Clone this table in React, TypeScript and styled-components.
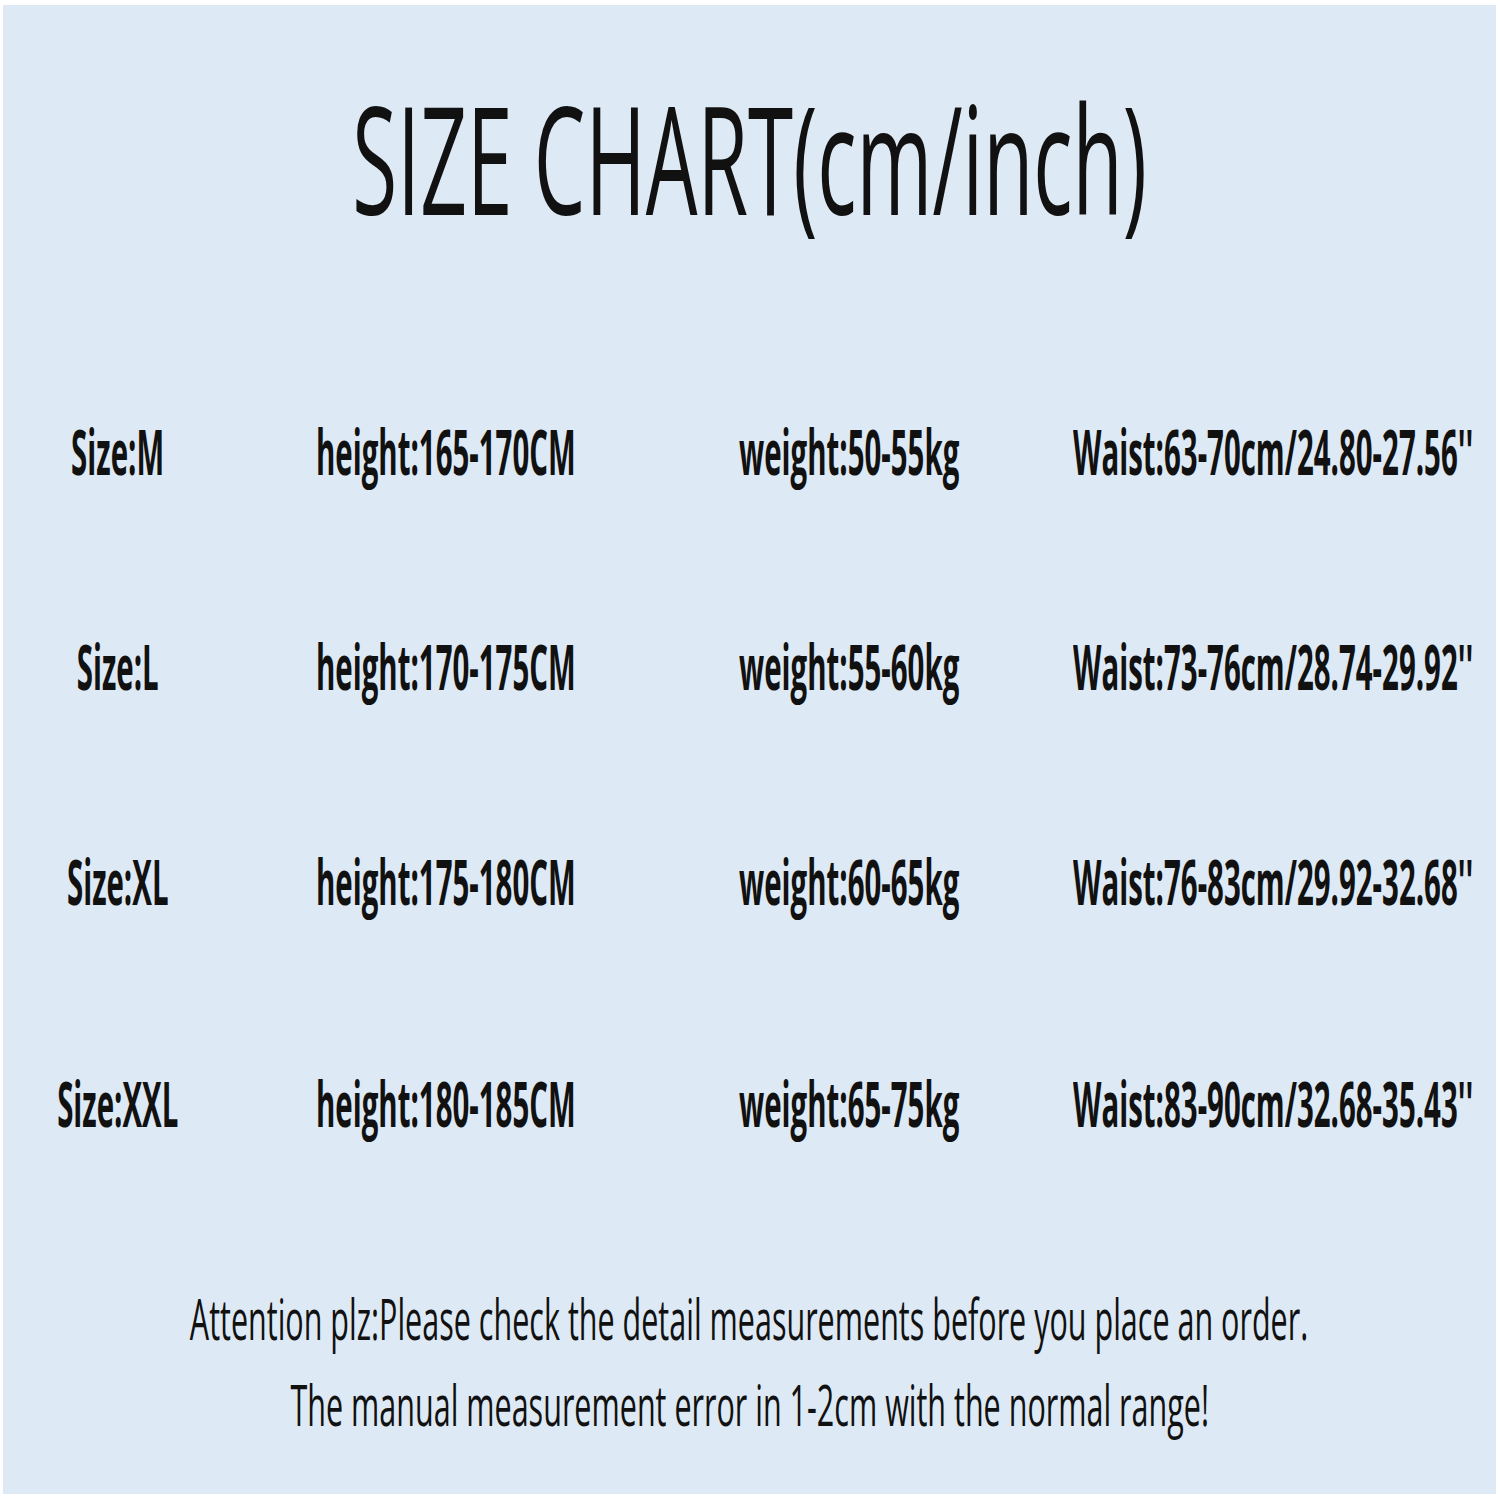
import styled, { createGlobalStyle } from "styled-components";

const GlobalStyle = createGlobalStyle`
  html, body {
    margin: 0;
    padding: 0;
    background: #ffffff;
  }
`;

const Page = styled.div`
  width: 1500px;
  height: 1500px;
  box-sizing: border-box;
  padding: 5px 4px 6px 3px;
  background: #ffffff;
  overflow: hidden;
`;

const Panel = styled.div`
  height: 100%;
  background: #dde9f4;
  display: flex;
  flex-direction: column;
  overflow: hidden;
  color: #111111;
  font-family: "Open Sans", "DejaVu Sans", sans-serif;
`;

const Title = styled.h1`
  margin: 0;
  padding-top: 77px;
  display: flex;
  justify-content: center;
  font-size: 150px;
  line-height: 150px;
  font-weight: 400;
  white-space: nowrap;
`;

const Squeeze = styled.span<{ $sx: number; $origin?: string }>`
  display: inline-block;
  flex: none;
  white-space: nowrap;
  transform: scaleX(${(p) => p.$sx});
  transform-origin: ${(p) => p.$origin ?? "center"};
`;

const Table = styled.div`
  margin-top: 187px;
  display: flex;
  flex-direction: column;
  gap: 152px;
`;

const Row = styled.div<{ $shift?: number }>`
  display: grid;
  grid-template-columns: 313px 423px 334px 1fr;
  height: 63px;
  margin-top: ${(p) => p.$shift ?? 0}px;
  font-size: 63px;
  line-height: 63px;
  font-weight: 700;
`;

const SizeCell = styled.div`
  width: 230px;
  display: flex;
  justify-content: center;
`;

const Cell = styled.div``;

const Notes = styled.div`
  margin-top: 141px;
  display: flex;
  flex-direction: column;
  align-items: center;
  font-size: 56px;
  line-height: 86px;
  font-weight: 400;
`;

const NoteLine = styled.div`
  display: flex;
  justify-content: center;
  width: 100%;
`;

const rows = [
  { size: "M", height: "165-170CM", weight: "50-55kg", waist: "63-70cm/24.80-27.56''" },
  { size: "L", height: "170-175CM", weight: "55-60kg", waist: "73-76cm/28.74-29.92''" },
  { size: "XL", height: "175-180CM", weight: "60-65kg", waist: "76-83cm/29.92-32.68''" },
  { size: "XXL", height: "180-185CM", weight: "65-75kg", waist: "83-90cm/32.68-35.43''", shift: 7 },
];

const BODY_SX = 0.467;
const NOTE_SX = 0.545;

export default function App() {
  return (
    <>
      <GlobalStyle />
      <Page>
        <Panel>
          <Title>
            <Squeeze $sx={0.546}>SIZE CHART(cm/inch)</Squeeze>
          </Title>
          <Table>
            {rows.map((r) => (
              <Row key={r.size} $shift={r.shift}>
                <SizeCell>
                  <Squeeze $sx={BODY_SX}>Size:{r.size}</Squeeze>
                </SizeCell>
                <Cell>
                  <Squeeze $sx={BODY_SX} $origin="left">
                    height:{r.height}
                  </Squeeze>
                </Cell>
                <Cell>
                  <Squeeze $sx={BODY_SX} $origin="left">
                    weight:{r.weight}
                  </Squeeze>
                </Cell>
                <Cell>
                  <Squeeze $sx={BODY_SX} $origin="left">
                    Waist:{r.waist}
                  </Squeeze>
                </Cell>
              </Row>
            ))}
          </Table>
          <Notes>
            <NoteLine>
              <Squeeze $sx={NOTE_SX}>
                Attention plz:Please check the detail measurements before you place an order.
              </Squeeze>
            </NoteLine>
            <NoteLine>
              <Squeeze $sx={NOTE_SX}>The manual measurement error in 1-2cm with the normal range!</Squeeze>
            </NoteLine>
          </Notes>
        </Panel>
      </Page>
    </>
  );
}
